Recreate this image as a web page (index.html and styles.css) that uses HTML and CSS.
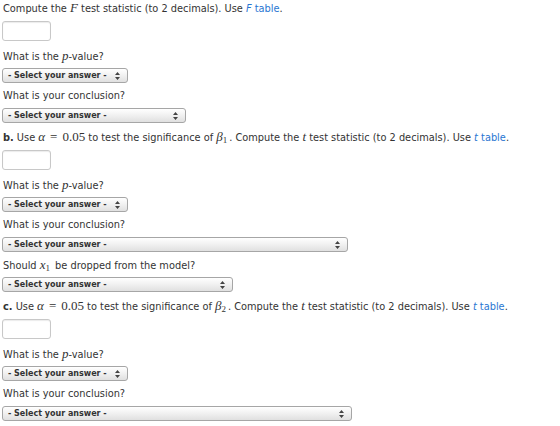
FILE: index.html
```html
<!DOCTYPE html>
<html lang="en">
<head>
  <meta charset="UTF-8">
  <title>Regression tests</title>
  <link rel="stylesheet" href="styles.css">
</head>
<body>

<div class="part">
  <p class="q">Compute the <i class="m">F</i> test statistic (to 2 decimals). Use <a href="#"><i>F</i> table</a>.</p>
  <div class="answer"></div>
  <p class="q gap">What is the <i class="m">p</i>-value?</p>
  <div class="select w1"><span>- Select your answer -</span><svg width="5" height="8" viewBox="0 0 5 8"><path d="M2.5 0 L5 3 H0 Z M2.5 8 L5 5 H0 Z" fill="#444"/></svg></div>
  <p class="q">What is your conclusion?</p>
  <div class="select w2"><span>- Select your answer -</span><svg width="5" height="8" viewBox="0 0 5 8"><path d="M2.5 0 L5 3 H0 Z M2.5 8 L5 5 H0 Z" fill="#444"/></svg></div>
</div>

<div class="part">
  <p class="q"><b>b.</b> Use <i class="m">α</i><span class="mr"><span class="eq">=</span>0.05</span> to test the significance of <i class="m">β</i><sub>1</sub>. Compute the <i class="m">t</i> test statistic (to 2 decimals). Use <a href="#"><i>t</i> table</a>.</p>
  <div class="answer"></div>
  <p class="q gap">What is the <i class="m">p</i>-value?</p>
  <div class="select w1"><span>- Select your answer -</span><svg width="5" height="8" viewBox="0 0 5 8"><path d="M2.5 0 L5 3 H0 Z M2.5 8 L5 5 H0 Z" fill="#444"/></svg></div>
  <p class="q">What is your conclusion?</p>
  <div class="select w3"><span>- Select your answer -</span><svg width="5" height="8" viewBox="0 0 5 8"><path d="M2.5 0 L5 3 H0 Z M2.5 8 L5 5 H0 Z" fill="#444"/></svg></div>
  <p class="q">Should <i class="m">x</i><sub>1</sub> be dropped from the model?</p>
  <div class="select w4"><span>- Select your answer -</span><svg width="5" height="8" viewBox="0 0 5 8"><path d="M2.5 0 L5 3 H0 Z M2.5 8 L5 5 H0 Z" fill="#444"/></svg></div>
</div>

<div class="part">
  <p class="q"><b>c.</b> Use <i class="m">α</i><span class="mr"><span class="eq">=</span>0.05</span> to test the significance of <i class="m">β</i><sub>2</sub>. Compute the <i class="m">t</i> test statistic (to 2 decimals). Use <a href="#"><i>t</i> table</a>.</p>
  <div class="answer"></div>
  <p class="q gap">What is the <i class="m">p</i>-value?</p>
  <div class="select w1"><span>- Select your answer -</span><svg width="5" height="8" viewBox="0 0 5 8"><path d="M2.5 0 L5 3 H0 Z M2.5 8 L5 5 H0 Z" fill="#444"/></svg></div>
  <p class="q">What is your conclusion?</p>
  <div class="select w5"><span>- Select your answer -</span><svg width="5" height="8" viewBox="0 0 5 8"><path d="M2.5 0 L5 3 H0 Z M2.5 8 L5 5 H0 Z" fill="#444"/></svg></div>
</div>

</body>
</html>
```

FILE: styles.css
```css
* {
  box-sizing: border-box;
}

body {
  margin: 0;
  padding: 0 0 0 3px;
  font-family: 'DejaVu Sans', Verdana, sans-serif;
  font-size: 9.8px;
  color: #333;
  background: #fff;
  overflow: hidden;
}

.part {
  display: flex;
  flex-direction: column;
  align-items: flex-start;
}

.part + .part {
  margin-top: 6px;
}

.q {
  margin: 5px 0 4px;
  height: 16px;
  line-height: 16px;
  white-space: nowrap;
}

.part .q:first-child {
  margin-top: 0;
}

.q.gap {
  margin-top: 7px;
}

.m {
  font-family: 'Liberation Serif', 'DejaVu Serif', serif;
  font-style: italic;
  font-size: 13px;
}

.mr {
  font-family: 'Liberation Serif', 'DejaVu Serif', serif;
  font-size: 13px;
}

.eq {
  padding: 0 5px;
}

sub {
  font-family: 'Liberation Serif', serif;
  font-size: 9px;
  vertical-align: -2px;
  line-height: 0;
  margin-right: 2px;
}

a {
  color: #2a76d2;
  text-decoration: none;
}

.answer {
  width: 49px;
  height: 20px;
  margin: 1px 0 0 -1px;
  border: 1px solid #c8c8c8;
  border-radius: 3px;
  box-shadow: inset 0 1px 1px rgba(0,0,0,0.08);
  background: #fff;
}

.select {
  display: flex;
  justify-content: space-between;
  align-items: center;
  height: 15px;
  margin-left: -1px;
  padding: 0 7px 0 5px;
  border: 1px solid #a6a6a6;
  border-radius: 3px;
  background: linear-gradient(#ffffff, #f2f2f2 45%, #e0e0e0);
  font-size: 8px;
  font-weight: bold;
  color: #333;
}

.w1 { width: 126px; }
.w2 { width: 184px; }
.w3 { width: 346px; }
.w4 { width: 231px; }
.w5 { width: 350px; }
```
